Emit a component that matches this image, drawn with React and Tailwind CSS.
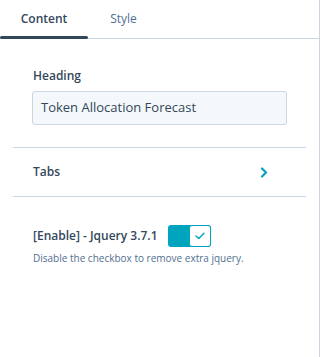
import React from "react";

const App = () => {
  return (
    <div className="w-[321px] h-[357px] bg-white" style={{ fontFamily: "'Open Sans', sans-serif" }}>
      <div className="w-[320px] h-full border-r border-[#cbd6e2] text-[#33475b]">
        <div className="flex border-b border-[#cbd6e2] h-[39px]">
          <div className="relative w-[88px] flex items-center justify-center text-[12px] font-semibold">
            Content
            <div className="absolute left-0 right-0 bottom-[-1px] h-[3px] rounded-full bg-[#33475b]" />
          </div>
          <div className="w-[71px] flex items-center justify-center text-[12px] text-[#516f90]">Style</div>
        </div>

        <div className="pl-[32px] pr-[33px] pt-[29px] pb-[22px]">
          <div className="pl-[1px] text-[12px] font-semibold leading-[16px]">Heading</div>
          <div className="mt-[7px] w-[255px] h-[34px] rounded-[3px] border border-[#cbd6e2] bg-[#f5f8fa] flex items-center pl-[8px] text-[13px] text-[#33475b]">
            Token Allocation Forecast
          </div>
        </div>

        <div className="mx-[13px] border-t border-[#cbd6e2]" />
        <div className="flex items-center justify-between h-[48px] pl-[20px] pr-[38px] mx-[13px]">
          <span className="text-[12px] font-semibold">Tabs</span>
          <svg width="8" height="11" viewBox="0 0 8 11" fill="none">
            <path d="M2 1.5 L6 5.5 L2 9.5" stroke="#00a4bd" strokeWidth="2.2" strokeLinecap="round" strokeLinejoin="round" />
          </svg>
        </div>
        <div className="mx-[13px] border-t border-[#cbd6e2]" />

        <div className="pl-[33px] pt-[28px]">
          <div className="flex items-center gap-[10px]">
            <span className="text-[12px] font-semibold">[Enable] - Jquery 3.7.1</span>
            <div className="flex w-[43px] h-[22px] rounded-[3px] bg-[#00a4bd] justify-end">
              <div className="w-[22px] h-[22px] rounded-[3px] border border-[#00a4bd] bg-white flex items-center justify-center">
                <svg width="10" height="8" viewBox="0 0 10 8" fill="none">
                  <path d="M1 4 L3.8 6.6 L9 1.2" stroke="#00a4bd" strokeWidth="1.4" strokeLinecap="round" strokeLinejoin="round" />
                </svg>
              </div>
            </div>
          </div>
          <div className="mt-[4px] text-[10px] text-[#516f90]">Disable the checkbox to remove extra jquery.</div>
        </div>
      </div>
    </div>
  );
};

export default App;
